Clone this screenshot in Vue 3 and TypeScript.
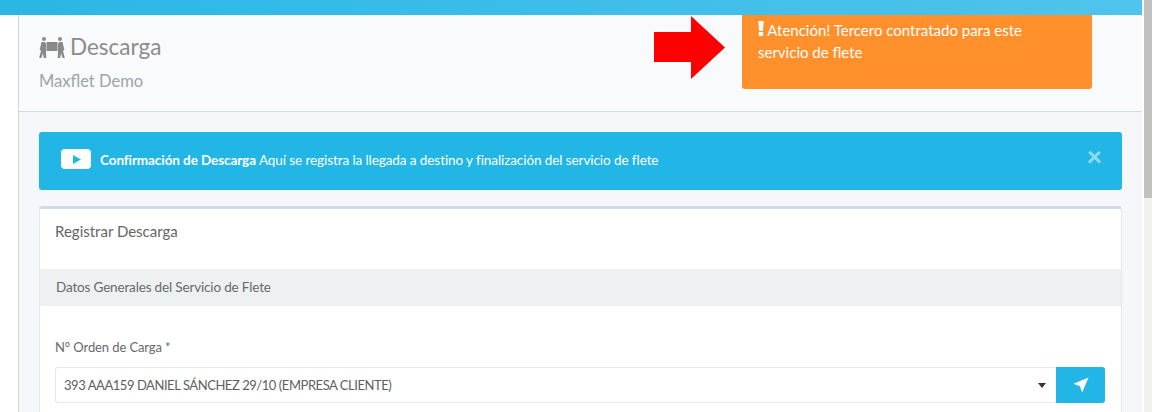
<script setup lang="ts">
const orderOption = "393 AAA159 DANIEL SÁNCHEZ 29/10 (EMPRESA CLIENTE)";
</script>

<template>
  <div class="page">
    <div class="topbar"></div>
    <div class="main">
      <header class="head">
        <div class="head-title">
          <h1>
            <svg class="carry-icon" viewBox="0 0 26 21" aria-hidden="true">
              <circle cx="5" cy="2" r="2" />
              <circle cx="21" cy="2" r="2" />
              <rect x="7.500" y="5" width="11" height="9" rx="0.500" />
              <path d="M2.500 5h3.500l1 2v7.500L7.200 21H4.800L4 16.500 2.300 21H.2L2 14 .7 12.500z" />
              <path d="M23.500 5H20l-1 2v7.500L18.800 21h2.400l.8-4.500 1.700 4.500h2.100L24 14l1.300-1.500z" />
            </svg>
            Descarga
          </h1>
          <small>Maxflet Demo</small>
        </div>
        <svg class="arrow" viewBox="0 0 71 63" aria-hidden="true">
          <path d="M0 16h37V0l34 31.500L37 63V46H0z" />
        </svg>
        <div class="warning">
          <svg class="bang" viewBox="0 0 6 15" aria-hidden="true">
            <path d="M.3 0h5.400l-.8 10H1.100zM.8 11h4.400v4H.8z" />
          </svg>
          Atención! Tercero contratado para este servicio de flete
        </div>
      </header>

      <section class="content">
        <div class="notice">
          <svg class="play" viewBox="0 0 30 20" aria-hidden="true">
            <rect width="30" height="20" rx="4" fill="#fff" />
            <path d="M12 6l8 4.500-8 4.500z" fill="#22b6e6" />
          </svg>
          <p><strong>Confirmación de Descarga</strong> Aquí se registra la llegada a destino y finalización del servicio de flete</p>
          <span class="close">×</span>
        </div>

        <div class="card">
          <h3 class="card-title">Registrar Descarga</h3>
          <div class="section-bar">Datos Generales del Servicio de Flete</div>
          <div class="form">
            <label>N° Orden de Carga *</label>
            <div class="input-row">
              <div class="select">
                <span>{{ orderOption }}</span>
                <i class="caret"></i>
              </div>
              <button class="send" type="button" aria-label="Enviar">
                <svg viewBox="0 0 16 16" aria-hidden="true">
                  <path d="M15.500.5L9.200 15.500 6.800 9.200.5 6.800z" />
                </svg>
              </button>
            </div>
          </div>
        </div>
      </section>
    </div>
    <div class="scrollbar"><div class="thumb"></div></div>
  </div>
</template>

<style>
html,
body {
  margin: 0;
  height: 100%;
  overflow: hidden;
  background: #fff;
}
</style>

<style scoped>
.page {
  width: 1152px;
  height: 412px;
  overflow: hidden;
  position: relative;
  font-family: Lato, "Noto Sans", sans-serif;
  font-size: 14px;
  color: #676a6c;
}

.topbar {
  height: 15px;
  width: 1142px;
  background: linear-gradient(90deg, #2ab7e6, #4fc4ec);
}

.main {
  margin-left: 18px;
  width: 1124px;
  box-sizing: border-box;
  border-left: 1px solid #d2d6de;
  background: #f5f7fa;
}

.head {
  height: 97px;
  box-sizing: border-box;
  background: #f9fafc;
  border-bottom: 1px solid #d2dce0;
  display: flex;
  padding-left: 20px;
}

.head-title {
  width: 615px;
  padding-top: 17px;
}

h1 {
  margin: 0;
  font-size: 22.500px;
  line-height: 30px;
  font-weight: 400;
  color: #8b8b8b;
  display: flex;
  align-items: center;
  gap: 5px;
}

.carry-icon {
  width: 26px;
  height: 21px;
  fill: #8a8a8a;
}

small {
  display: block;
  margin-top: 8px;
  font-size: 16.500px;
  line-height: 22px;
  color: #9aa5a8;
}

.arrow {
  width: 71px;
  height: 63px;
  margin-top: 1px;
  fill: #ff0000;
  flex: none;
}

.warning {
  margin-left: 17px;
  width: 350px;
  height: 74px;
  box-sizing: border-box;
  padding: 5px 50px 5px 16px;
  background: #ff902c;
  color: #fff;
  border-radius: 0 0 3px 3px;
  font-size: 15px;
  line-height: 21.500px;
}

.bang {
  width: 6px;
  height: 15px;
  fill: #fff;
}

.content {
  padding: 20px 20px 0;
}

.notice {
  position: relative;
  height: 58px;
  box-sizing: border-box;
  padding: 0 0 4px 22px;
  border-radius: 3px;
  background: #22b6e6;
  color: #fff;
  display: flex;
  align-items: center;
  font-size: 13.500px;
  letter-spacing: -0.08px;
}

.play {
  width: 30px;
  height: 20px;
  margin-right: 9px;
  flex: none;
}

.notice p {
  margin: 2px 0 0;
}

.close {
  position: absolute;
  right: 20px;
  top: 11px;
  font-size: 27px;
  font-weight: 900;
  line-height: 26px;
  color: rgba(255, 255, 255, 0.5);
}

.card {
  margin-top: 16px;
  background: #fff;
  border: 1px solid #e3e8ea;
  border-top: 3px solid #d2dce0;
  border-radius: 3px;
  height: 300px;
}

.card-title {
  margin: 0;
  height: 60px;
  box-sizing: border-box;
  padding: 12px 15px 0;
  font-size: 15px;
  line-height: 20px;
  font-weight: 400;
  color: #666;
}

.section-bar {
  height: 37px;
  line-height: 36px;
  padding-left: 16px;
  background: #eef1f2;
  font-size: 13.500px;
  letter-spacing: -0.16px;
  color: #676a6c;
}

.form {
  padding: 31px 16px 0 15px;
}

label {
  display: block;
  font-size: 13px;
  letter-spacing: -0.1px;
  line-height: 20px;
  color: #676a6c;
}

.input-row {
  display: flex;
  margin-top: 10px;
  height: 36px;
}

.select {
  flex: 1;
  box-sizing: border-box;
  border: 1px solid #e3e8ea;
  border-right: 0;
  border-radius: 3px 0 0 3px;
  display: flex;
  align-items: center;
  justify-content: space-between;
  padding: 0 10px 0 8px;
  font-size: 13px;
  letter-spacing: -0.45px;
  color: #5c5f61;
}

.caret {
  border-style: solid;
  border-width: 5px 4px 0;
  border-color: #333 transparent transparent;
}

.send {
  width: 49px;
  border: 0;
  padding: 0;
  background: #22b6e6;
  border-radius: 0 3px 3px 0;
  display: flex;
  align-items: center;
  justify-content: center;
}

.send svg {
  width: 16px;
  height: 16px;
  fill: #fff;
}

.scrollbar {
  position: absolute;
  top: 0;
  right: 0;
  width: 8px;
  height: 412px;
  background: #f1f1f1;
}

.thumb {
  height: 198px;
  background: #c1c1c1;
}
</style>
